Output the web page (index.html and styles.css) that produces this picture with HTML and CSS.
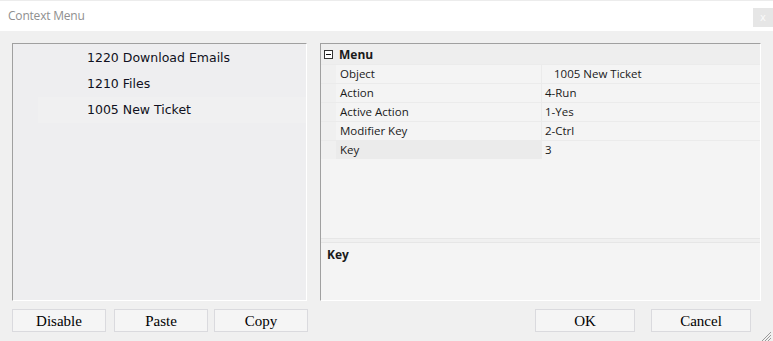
FILE: index.html
```html
<!DOCTYPE html>
<html>
<head>
<meta charset="utf-8">
<link rel="stylesheet" href="styles.css">
</head>
<body>
<div class="window">
  <div class="titlebar">
    <span class="title">Context Menu</span>
    <span class="close">x</span>
  </div>
  <div class="main">
    <div class="list">
      <div class="item">1220 Download Emails</div>
      <div class="item">1210 Files</div>
      <div class="item selected">1005 New Ticket</div>
    </div>
    <div class="props">
      <div class="grid">
        <div class="cat">
          <span class="toggle"><svg width="9" height="9" viewBox="0 0 9 9"><rect x="0.5" y="0.5" width="8" height="8" fill="#fff" stroke="#333"/><path d="M2 4.5h5" stroke="#111"/></svg></span>
          <span class="cat-label">Menu</span>
        </div>
        <div class="row"><span class="gutter"></span><span class="name">Object</span><span class="value indent">1005 New Ticket</span></div>
        <div class="row"><span class="gutter"></span><span class="name">Action</span><span class="value">4-Run</span></div>
        <div class="row"><span class="gutter"></span><span class="name">Active Action</span><span class="value">1-Yes</span></div>
        <div class="row"><span class="gutter"></span><span class="name">Modifier Key</span><span class="value">2-Ctrl</span></div>
        <div class="row"><span class="gutter"></span><span class="name sel">Key</span><span class="value">3</span></div>
      </div>
      <div class="desc">
        <div class="desc-title">Key</div>
      </div>
    </div>
  </div>
  <div class="buttons">
    <div class="btn-group left">
      <button class="btn">Disable</button>
      <button class="btn b2">Paste</button>
      <button class="btn b3">Copy</button>
    </div>
    <div class="btn-group right">
      <button class="btn wide">OK</button>
      <button class="btn wide">Cancel</button>
    </div>
  </div>
  <svg class="grip" width="12" height="10" viewBox="0 0 12 10"><path d="M11 1L2 10M11 4L5 10M11 7L8 10" stroke="#9a9a9a" stroke-width="1"/></svg>
</div>
</body>
</html>
```
FILE: styles.css
```css
html, body {
  margin: 0;
  padding: 0;
}
body {
  width: 773px;
  height: 341px;
  background: #f0f0f0;
  overflow: hidden;
}
.window {
  position: relative;
  width: 773px;
  height: 341px;
  background: #f0f0f0;
}
.titlebar {
  background: #fff;
  border-top: 1px solid #ececec;
  display: flex;
  justify-content: space-between;
  align-items: flex-start;
  box-sizing: border-box;
  height: 31px;
}
.title {
  font-family: "Open Sans", sans-serif;
  font-size: 12px;
  color: #8f8f8f;
  margin: 6px 0 0 8px;
  letter-spacing: -0.2px;
}
.close {
  width: 20px;
  height: 19px;
  margin-top: 7px;
  background: #e6e6e6;
  color: #fafafa;
  font-family: "DejaVu Sans", sans-serif;
  font-size: 10px;
  display: flex;
  align-items: center;
  justify-content: center;
}
.main {
  display: flex;
  gap: 13px;
  padding: 12px 12px 0 12px;
}
.list {
  width: 295px;
  height: 258px;
  box-sizing: border-box;
  border-top: 1px solid #a0a0a0;
  border-left: 1px solid #a0a0a0;
  border-right: 1px solid #fff;
  border-bottom: 1px solid #fff;
  background: #eeeef0;
  padding-top: 1px;
}
.item {
  height: 26px;
  line-height: 26px;
  margin-left: 25px;
  padding-left: 49px;
  font-family: "DejaVu Sans", sans-serif;
  font-size: 12.5px;
  color: #101020;
}
.item.selected {
  background: #f0f0f1;
}
.props {
  width: 441px;
  height: 258px;
  box-sizing: border-box;
  border-top: 1px solid #a0a0a0;
  border-left: 1px solid #a0a0a0;
  border-right: 1px solid #fff;
  border-bottom: 1px solid #fff;
  background: #f0f0f0;
  display: flex;
  flex-direction: column;
  font-family: "Open Sans", sans-serif;
  font-size: 11.5px;
  color: #1a1a1a;
}
.grid {
  height: 194px;
  background: #f4f4f4;
  border-bottom: 1px solid #e6e6e6;
}
.cat {
  height: 20px;
  display: flex;
  align-items: center;
  background: #eeeeee;
}
.toggle {
  display: flex;
  margin-left: 3px;
  margin-top: 1px;
}
.cat-label {
  font-weight: bold;
  margin-left: 6px;
  font-size: 12px;
}
.row {
  height: 18px;
  display: flex;
  border-top: 1px solid #ebebeb;
  line-height: 18px;
}
.gutter {
  width: 15px;
  background: #f0f0f0;
}
.name {
  width: 205px;
  padding-left: 4px;
  box-sizing: border-box;
}
.name.sel {
  background: #ebebeb;
}
.value {
  flex: 1;
  border-left: 1px solid #ebebeb;
  padding-left: 3px;
}
.value.indent {
  padding-left: 12px;
}
.desc {
  margin-top: 3px;
  flex: 1;
  background: #f4f4f4;
  border-top: 1px solid #e6e6e6;
}
.desc-title {
  font-weight: bold;
  font-size: 12px;
  margin: 3px 0 0 6px;
}
.buttons {
  display: flex;
  justify-content: space-between;
  padding: 8px 22px 0 12px;
}
.btn-group {
  display: flex;
}
.btn-group.right {
  gap: 16px;
}
.btn {
  width: 94px;
  height: 23px;
  box-sizing: border-box;
  background: #f5f5f5;
  border: 1px solid #dadade;
  font-family: "Liberation Serif", serif;
  font-size: 15px;
  color: #000;
  padding: 0;
  margin: 0;
  line-height: 20px;
}
.btn.b2 {
  margin-left: 8px;
}
.btn.b3 {
  margin-left: 6px;
}
.btn.wide {
  width: 100px;
}
.grip {
  position: absolute;
  right: 1px;
  bottom: 0;
}
```
